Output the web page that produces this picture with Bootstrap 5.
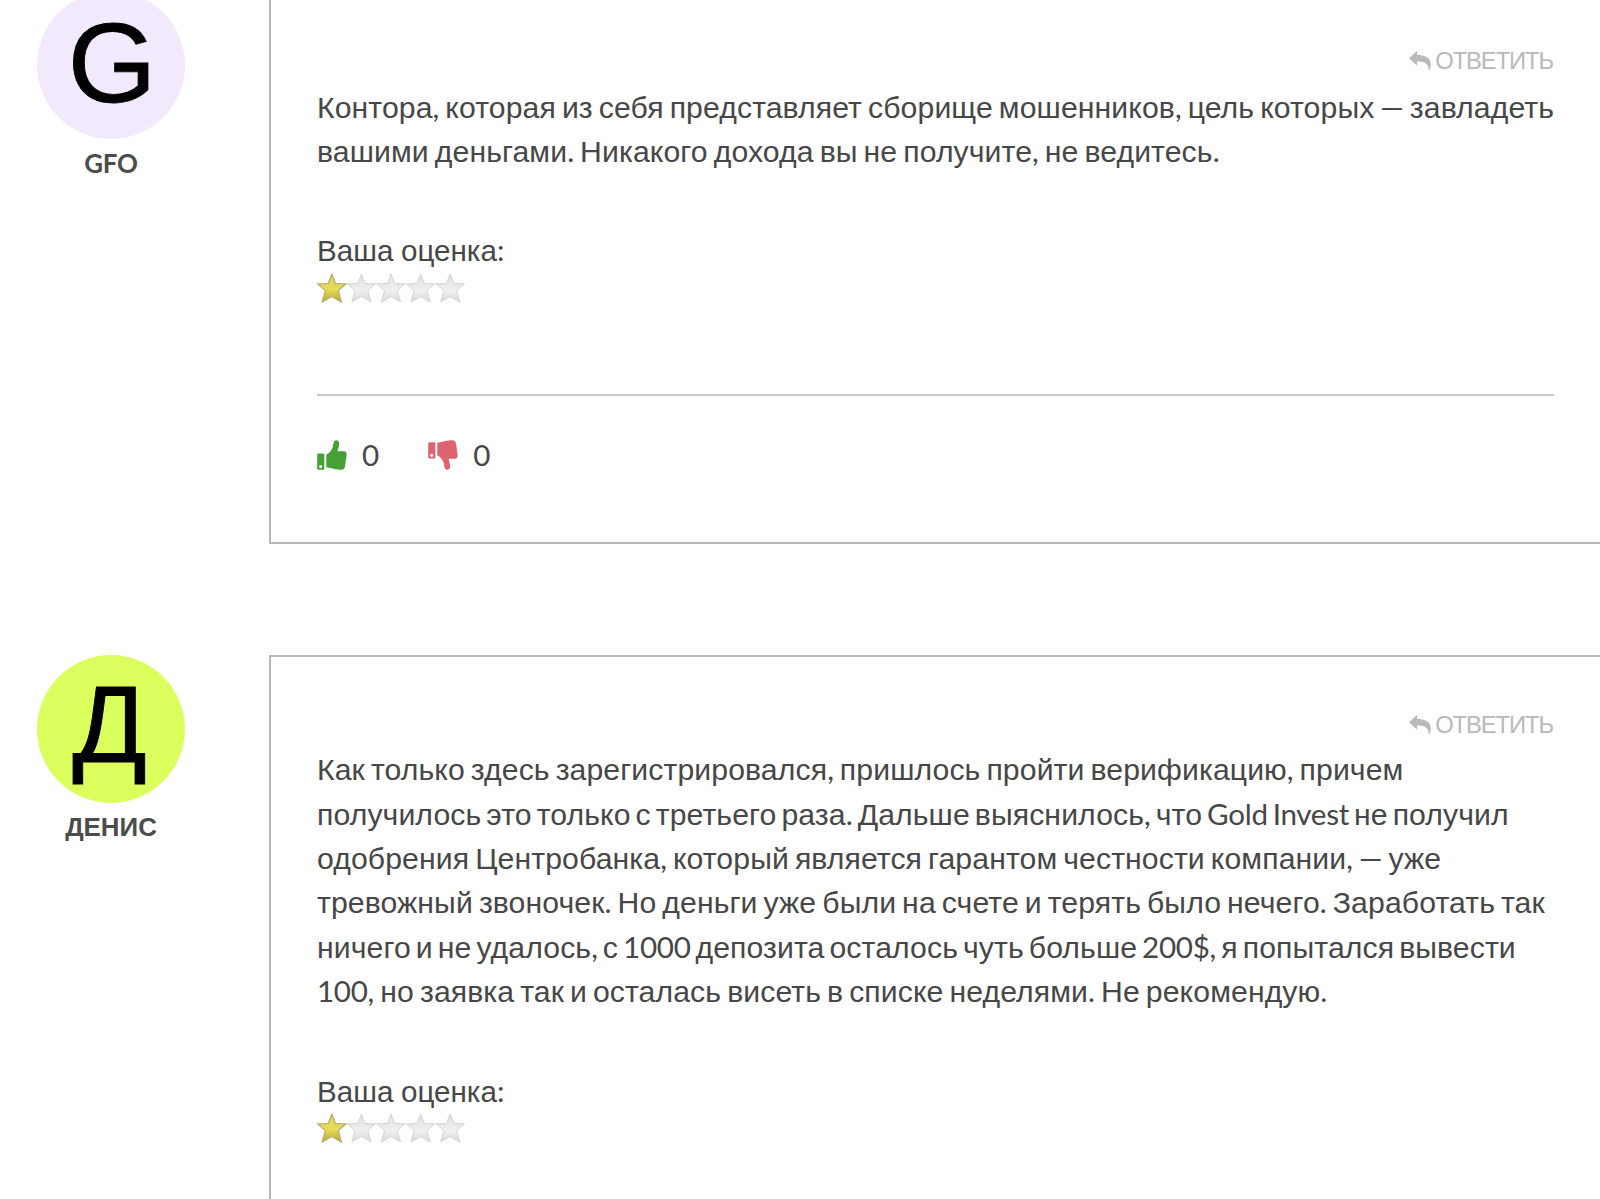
<!DOCTYPE html>
<html lang="ru">
<head>
  <title>Отзывы</title>
  <meta charset="UTF-8">
  <meta name="viewport" content="width=device-width, initial-scale=1.0">
  <link href="https://cdn.jsdelivr.net/npm/bootstrap@5.3.0/dist/css/bootstrap.min.css" rel="stylesheet">
  <style>
    body {
      font-family: Lato, "Liberation Sans", sans-serif;
      font-size: 29.6px;
      line-height: 44.4px;
      color: #474747;
      background: #fff;
      height: 1199px;
    }
    /* кириллица набирается гротеском, латиница и цифры остаются в Lato */
    .cyr {
      font-family: "Liberation Sans", Arial, sans-serif;
      line-height: 1;
    }
    .lat { letter-spacing: -.3px; }
    .review {
      margin-bottom: 111px;
    }
    .review-list {
      margin-top: -9px;
    }
    .review-author {
      width: 269px;
      padding-left: 37px;
    }
    .author-box {
      width: 148px;
    }
    .avatar {
      width: 148px;
      height: 148px;
      font: 111px/1 "Liberation Sans", sans-serif;
      -webkit-text-stroke: .9px #000;
      color: #000;
    }
    .avatar-g {
      background: #f2e9fd;
      font-size: 114px;
      padding: 0 0 5px 2px;
    }
    .avatar-d {
      background: #dbff5c;
      font-size: 110px;
      padding: 0 3px 11px 0;
    }
    .author-name {
      font-size: 25.9px;
      line-height: 30px;
      margin-top: 9px;
      color: #4c4c4c;
    }
    .avatar-d + .author-name { margin-top: 8px; }
    .review-body {
      border: 2px solid #b7b7b7;
      border-right: 0;
      padding: 45px 46px 0 46px;
      height: 553px;
    }
    .review-body.tall {
      height: 546px;
      border-bottom: 0;
    }
    .reply-link {
      font-size: 23.8px;
      height: 46.5px;
      padding-right: 1px;
      letter-spacing: -1.1px;
      color: #b9b9b9;
    }
    .tall .reply-link { height: 45.2px; }
    .reply-link svg { margin-right: 4px; }
    .review-text {
      margin-bottom: 55px;
      white-space: nowrap;
      word-spacing: -1.6px;
    }
    .review-text .cyr {
      font-size: 1.02em;
      letter-spacing: .1px;
    }
    .review-text .tight { word-spacing: -2.6px; }
    .stars svg { display: block; }
    .review-line {
      height: 2px;
      background: #cbcbcb;
      margin: 91px 0 37px;
    }
    .vote { gap: 15px; }
    .votes { gap: 49px; }
  </style>
</head>
<body class="overflow-hidden">
  <!-- Общие иконки -->
  <svg width="0" height="0" class="position-absolute">
    <defs>
      <linearGradient id="goldFill" x1="0" y1="0" x2="0" y2="1">
        <stop offset="0" stop-color="#d8cf7c"/>
        <stop offset=".55" stop-color="#e8dc50"/>
        <stop offset="1" stop-color="#b5a643"/>
      </linearGradient>
      <linearGradient id="greyFill" x1="0" y1="0" x2="0" y2="1">
        <stop offset="0" stop-color="#e2e2e2"/>
        <stop offset=".6" stop-color="#efefef"/>
        <stop offset="1" stop-color="#d9d9d9"/>
      </linearGradient>
      <path id="star" d="M14.8 1 18.5 10.6 28.6 11 21.2 17.6 24.4 29 14.8 23.600 5.200 29 8.400 17.6 .9 11 11.100 10.6Z"/>
      <symbol id="stars" viewBox="0 0 148 30">
        <path d="M0 10.8H148" stroke="#e3e3e3" stroke-width="1"/>
        <use href="#star" fill="url(#goldFill)" stroke="#b6ab62" stroke-width="1.2"/>
        <g fill="url(#greyFill)" stroke="#d6d6d6" stroke-width="1">
          <use href="#star" x="29.6"/>
          <use href="#star" x="59.2"/>
          <use href="#star" x="88.8"/>
          <use href="#star" x="118.4"/>
        </g>
      </symbol>
      <symbol id="reply" viewBox="0 0 22 20">
        <path d="M0 7.2 8 0V4C16.500 4 21.600 6.500 21.800 13.500 21.800 16 21 18.200 19.800 19.800 19.600 13 16.500 10.600 8 10.600V14.500Z"/>
      </symbol>
      <path id="hand" d="M9.300 14.500C12 13.500 14.500 10.500 15.800 7 16.500 4.500 16 .3 19.300 .3 22.600 .3 22.700 4.500 21.500 7.500 21 9 20.700 10 20.600 11.200H27Q29.800 11.400 29.700 14.500L28 26.500Q27.500 29.500 24.500 29.800C19 30 15 28.300 9.300 27.300Z"/>
      <path id="cuff" fill-rule="evenodd" d="M1.500 13.500H6A1.300 1.300 0 0 1 7.300 14.800V28.500A1.300 1.300 0 0 1 6 29.800H1.500A1.300 1.300 0 0 1 .2 28.500V14.800A1.300 1.300 0 0 1 1.500 13.500ZM3.700 25A1.600 1.600 0 1 0 3.700 28.200 1.600 1.600 0 1 0 3.700 25Z"/>
    </defs>
  </svg>

  <div class="review-list">
    <!-- Отзыв GFO -->
    <div class="review d-flex">
      <div class="review-author flex-shrink-0">
        <div class="author-box text-center">
          <div class="avatar avatar-g rounded-circle d-flex align-items-center justify-content-center">G</div>
          <div class="author-name fw-bold">GFO</div>
        </div>
      </div>
      <div class="review-body flex-grow-1">
        <div class="reply-link d-flex justify-content-end align-items-center">
          <svg width="22" height="20" fill="currentColor"><use href="#reply"/></svg><span class="cyr">ОТВЕТИТЬ</span>
        </div>
        <div class="review-text">Контора, которая из себя представляет сборище мошенников, цель которых — завладеть<br>вашими деньгами. Никакого дохода вы не получите, не ведитесь.</div>
        <div class="review-label">Ваша оценка:</div>
        <div class="stars"><svg width="148" height="30"><use href="#stars"/></svg></div>
        <div class="review-line"></div>
        <div class="votes d-flex">
          <div class="vote d-flex align-items-center">
            <svg width="30" height="30" fill="#46a035"><use href="#cuff"/><use href="#hand"/></svg>
            <span>0</span>
          </div>
          <div class="vote d-flex align-items-center">
            <svg width="30" height="30" fill="#df636e"><use href="#cuff" y="-11.300"/><use href="#hand" transform="matrix(1 0 0 -1 0 30)"/></svg>
            <span>0</span>
          </div>
        </div>
      </div>
    </div>

    <!-- Отзыв ДЕНИС -->
    <div class="review d-flex mb-0">
      <div class="review-author flex-shrink-0">
        <div class="author-box text-center">
          <div class="avatar avatar-d rounded-circle d-flex align-items-center justify-content-center">Д</div>
          <div class="author-name fw-bold">ДЕНИС</div>
        </div>
      </div>
      <div class="review-body tall flex-grow-1">
        <div class="reply-link d-flex justify-content-end align-items-center">
          <svg width="22" height="20" fill="currentColor"><use href="#reply"/></svg><span class="cyr">ОТВЕТИТЬ</span>
        </div>
        <div class="review-text">Как только здесь зарегистрировался, пришлось пройти верификацию, причем<br><span class="tight">получилось это только с третьего раза. Дальше выяснилось, что Gold Invest не получил</span><br>одобрения Центробанка, который является гарантом честности компании, — уже<br>тревожный звоночек. Но деньги уже были на счете и терять было нечего. Заработать так<br><span class="tight">ничего и не удалось, с 1000 депозита осталось чуть больше 200$, я попытался вывести</span><br>100, но заявка так и осталась висеть в списке неделями. Не рекомендую.</div>
        <div class="review-label">Ваша оценка:</div>
        <div class="stars"><svg width="148" height="30"><use href="#stars"/></svg></div>
      </div>
    </div>
  </div>

  <script src="https://cdn.jsdelivr.net/npm/bootstrap@5.3.0/dist/js/bootstrap.bundle.min.js"></script>
  <script>
    // Оборачиваем слова по алфавиту, чтобы задать каждому свой шрифт
    function wrapWords(node) {
      if (node.nodeType === Node.TEXT_NODE) {
        const holder = document.createElement('template');
        holder.innerHTML = node.textContent
          .replace(/[\u0400-\u04FF]+|[A-Za-z0-9$]+/g, function(word) {
            const name = /[\u0400-\u04FF]/.test(word) ? 'cyr' : 'lat';
            return `<span class="${name}">${word}</span>`;
          });
        node.replaceWith(holder.content);
      } else {
        Array.from(node.childNodes).forEach(wrapWords);
      }
    }

    document.querySelectorAll('.review-text, .review-label, .author-name').forEach(wrapWords);
  </script>
</body>
</html>
